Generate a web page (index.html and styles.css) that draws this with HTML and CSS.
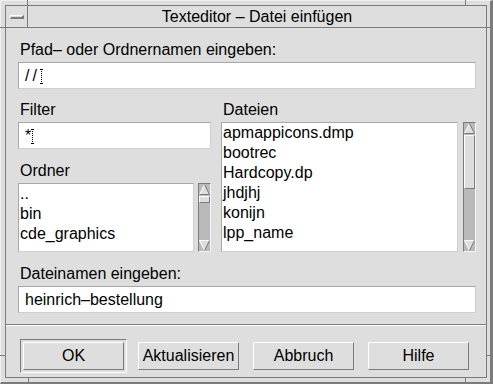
FILE: index.html
```html
<!DOCTYPE html>
<html>
  <head>
    <meta charset="utf-8">
    <title>Texteditor – Datei einfügen</title>
    <link rel="stylesheet" href="styles.css">
  </head>
  <body>
    <div class="window">
      <!-- Eckmarken des Fensterrahmens -->
      <span class="tick tick-v tick-tl"></span>
      <span class="tick tick-v tick-tr"></span>
      <span class="tick tick-h tick-lt"></span>
      <span class="tick tick-h tick-lb"></span>
      <span class="tick tick-h tick-rt"></span>
      <span class="tick tick-h tick-rb"></span>
      <span class="tick tick-b tick-bl"></span>
      <span class="tick tick-b tick-br"></span>

      <div class="client">
        <div class="titlebar">
          <div class="menu-btn"><span class="menu-glyph"></span></div>
          <div class="title">Texteditor – Datei einfügen</div>
        </div>

        <div class="form">
          <div class="lbl">Pfad– oder Ordnernamen eingeben:</div>
          <div class="field"><span class="spaced">//</span><span class="caret"></span></div>

          <div class="cols">
            <div class="col">
              <div class="lbl">Filter</div>
              <div class="field">*<span class="caret"></span></div>
              <div class="lbl lbl-gap">Ordner</div>
              <div class="listwrap listwrap-left">
                <div class="list list-short">
                  <div class="item">..</div>
                  <div class="item">bin</div>
                  <div class="item">cde_graphics</div>
                </div>
                <div class="scrollbar">
                  <svg class="arrow" width="11" height="11" viewBox="0 0 11 11">
                    <polygon points="5.5,0.5 10.5,10.5 0.5,10.5" fill="#dedede"/>
                    <polyline points="0.5,10.5 5.5,0.5" fill="none" stroke="#fff"/>
                    <polyline points="5.5,0.5 10.5,10.5 0.5,10.5" fill="none" stroke="#7b7b7b"/>
                  </svg>
                  <div class="thumb thumb-small"></div>
                  <div class="trough"></div>
                  <svg class="arrow" width="11" height="11" viewBox="0 0 11 11">
                    <polygon points="0.5,0.5 10.5,0.5 5.5,10.5" fill="#dedede"/>
                    <polyline points="5.5,10.5 0.5,0.5 10.5,0.5" fill="none" stroke="#fff"/>
                    <polyline points="10.5,0.5 5.5,10.5" fill="none" stroke="#7b7b7b"/>
                  </svg>
                </div>
              </div>
            </div>

            <div class="col">
              <div class="lbl">Dateien</div>
              <div class="listwrap">
                <div class="list list-tall">
                  <div class="item">apmappicons.dmp</div>
                  <div class="item">bootrec</div>
                  <div class="item">Hardcopy.dp</div>
                  <div class="item">jhdjhj</div>
                  <div class="item">konijn</div>
                  <div class="item">lpp_name</div>
                </div>
                <div class="scrollbar">
                  <svg class="arrow" width="11" height="11" viewBox="0 0 11 11">
                    <polygon points="5.5,0.5 10.5,10.5 0.5,10.5" fill="#dedede"/>
                    <polyline points="0.5,10.5 5.5,0.5" fill="none" stroke="#fff"/>
                    <polyline points="5.5,0.5 10.5,10.5 0.5,10.5" fill="none" stroke="#7b7b7b"/>
                  </svg>
                  <div class="thumb thumb-big"></div>
                  <div class="trough"></div>
                  <svg class="arrow" width="11" height="11" viewBox="0 0 11 11">
                    <polygon points="0.5,0.5 10.5,0.5 5.5,10.5" fill="#dedede"/>
                    <polyline points="5.5,10.5 0.5,0.5 10.5,0.5" fill="none" stroke="#fff"/>
                    <polyline points="10.5,0.5 5.5,10.5" fill="none" stroke="#7b7b7b"/>
                  </svg>
                </div>
              </div>
            </div>
          </div>

          <div class="lbl lbl-gap">Dateinamen eingeben:</div>
          <div class="field">heinrich–bestellung</div>
        </div>

        <div class="separator"></div>

        <div class="buttons">
          <button class="btn btn-default">OK</button>
          <button class="btn">Aktualisieren</button>
          <button class="btn">Abbruch</button>
          <button class="btn">Hilfe</button>
        </div>
      </div>
    </div>
  </body>
</html>
```

FILE: styles.css
```css
* {
  box-sizing: border-box;
}
body {
  margin: 0;
  background: #dedede;
  color: #000;
  font-family: "Liberation Sans", Arial, sans-serif;
  font-size: 16px;
}
/* Fensterrahmen */
.window {
  position: relative;
  width: 493px;
  height: 384px;
  background: #dedede;
  border-top: 1px solid #f0f0f0;
  border-left: 1px solid #f0f0f0;
  border-right: 3px solid #7b7b7b;
  border-bottom: 2px solid #7b7b7b;
  padding: 4px 3px 4px 4px;
}
.tick {
  position: absolute;
  background: #7b7b7b;
}
.tick-v {
  top: -1px;
  width: 1px;
  height: 5px;
}
.tick-tl { left: 26px; }
.tick-tr { left: 464px; }
.tick-h {
  height: 1px;
  width: 5px;
}
.tick-lt { left: -1px; top: 26px; }
.tick-lb { left: -1px; top: 354px; }
.tick-rt { left: 486px; top: 26px; width: 3px; }
.tick-rb { left: 486px; top: 354px; width: 3px; }
.tick-b {
  top: 377px;
  width: 1px;
  height: 4px;
}
.tick-bl { left: 27px; }
.tick-br { left: 464px; }

.client {
  height: 100%;
  border: 1px solid #7b7b7b;
  display: flex;
  flex-direction: column;
}
/* Titelleiste */
.titlebar {
  display: flex;
  height: 22px;
  border-bottom: 1px solid #7b7b7b;
}
.menu-btn {
  width: 22px;
  border-right: 1px solid #7b7b7b;
  padding: 9px 0 0 4px;
}
.menu-glyph {
  display: block;
  width: 14px;
  height: 4px;
  border-top: 1px solid #fff;
  border-left: 1px solid #fff;
  border-right: 2px solid #7b7b7b;
  border-bottom: 2px solid #7b7b7b;
}
.title {
  flex: 1;
  text-align: center;
  line-height: 21px;
}
/* Formular */
.form {
  padding: 12px 10px 11px 12px;
}
.lbl {
  line-height: 20px;
  padding-left: 2px;
  margin-bottom: 2px;
}
.lbl-gap {
  margin-top: 12px;
}
.field {
  height: 27px;
  line-height: 25px;
  background: #fff;
  border: 1px solid #a8a8a8;
  border-right-color: #cfcfcf;
  border-bottom-color: #cfcfcf;
  padding-left: 6px;
  white-space: nowrap;
}
.spaced {
  letter-spacing: 3px;
}
.caret {
  display: inline-block;
  position: relative;
  width: 1px;
  height: 15px;
  margin-left: 1px;
  vertical-align: -3px;
  border-left: 1px dotted #000;
}
.caret::before,
.caret::after {
  content: "";
  position: absolute;
  left: -2px;
  width: 3px;
  height: 1px;
  background: #000;
}
.caret::before { top: 0; }
.caret::after { bottom: 0; }

.cols {
  display: grid;
  grid-template-columns: 193px 1fr;
  column-gap: 10px;
  margin-top: 11px;
}
.listwrap {
  display: flex;
  gap: 5px;
}
.listwrap-left {
  gap: 4px;
}
.list {
  flex: 1;
  background: #fff;
  border: 1px solid #a8a8a8;
  border-right-color: #cfcfcf;
  border-bottom-color: #cfcfcf;
  padding-left: 1px;
  overflow: hidden;
}
.list-short { height: 69px; }
.list-tall { height: 130px; }
.item {
  line-height: 20px;
  white-space: nowrap;
}
/* Bildlaufleiste */
.scrollbar {
  width: 13px;
  display: flex;
  flex-direction: column;
  background: #bababa;
  border: 1px solid #7b7b7b;
  border-right-color: #f4f4f4;
  border-bottom-color: #f4f4f4;
}
.arrow {
  display: block;
  flex: none;
}
.thumb {
  flex: none;
  background: #dedede;
  border-top: 1px solid #fff;
  border-left: 1px solid #fff;
  border-right: 1px solid #7b7b7b;
  border-bottom: 1px solid #7b7b7b;
  margin-top: 1px;
}
.thumb-small { height: 7px; }
.thumb-big { height: 54px; }
.trough { flex: 1; }

.separator {
  border-top: 1px solid #7b7b7b;
  border-bottom: 1px solid #fff;
}
/* Schaltflächen */
.buttons {
  flex: 1;
  display: flex;
  gap: 14px;
  padding: 16px 0 0 17px;
}
.btn {
  position: relative;
  width: 101px;
  height: 28px;
  font: inherit;
  color: #000;
  background: #dedede;
  border: 1px solid #7b7b7b;
  border-top-color: #fff;
  border-left-color: #fff;
  padding: 0;
}
.btn-default::before {
  content: "";
  position: absolute;
  left: -4px;
  top: -4px;
  right: -4px;
  bottom: -4px;
  border: 1px solid #fff;
  border-top-color: #7b7b7b;
  border-left-color: #7b7b7b;
}
```
